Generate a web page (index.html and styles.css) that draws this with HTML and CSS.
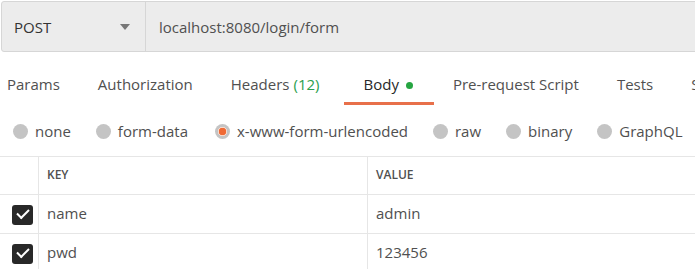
FILE: index.html
```html
<!DOCTYPE html>
<html lang="en">
<head>
    <meta charset="UTF-8">
    <title>Request</title>
    <link rel="stylesheet" href="styles.css">
</head>
<body>
    <div class="url-bar">
        <div class="method">
            <span>POST</span>
            <span class="caret"></span>
        </div>
        <div class="url">localhost:8080/login/form</div>
    </div>

    <div class="tabs">
        <span class="tab">Params</span>
        <span class="tab">Authorization</span>
        <span class="tab">Headers <em class="count">(12)</em></span>
        <span class="tab active">Body <i class="dot"></i></span>
        <span class="tab">Pre-request Script</span>
        <span class="tab">Tests</span>
        <span class="tab">Settings</span>
    </div>

    <div class="body-types">
        <label class="radio"><i></i>none</label>
        <label class="radio"><i></i>form-data</label>
        <label class="radio on"><i></i>x-www-form-urlencoded</label>
        <label class="radio"><i></i>raw</label>
        <label class="radio"><i></i>binary</label>
        <label class="radio"><i></i>GraphQL</label>
    </div>

    <div class="kv-table">
        <div class="row head">
            <div class="cell check"></div>
            <div class="cell key">KEY</div>
            <div class="cell value">VALUE</div>
        </div>
        <div class="row">
            <div class="cell check"><span class="box"></span></div>
            <div class="cell key">name</div>
            <div class="cell value">admin</div>
        </div>
        <div class="row">
            <div class="cell check"><span class="box"></span></div>
            <div class="cell key">pwd</div>
            <div class="cell value">123456</div>
        </div>
    </div>
</body>
</html>
```

FILE: styles.css
```css
* {
    margin: 0;
    padding: 0;
    box-sizing: border-box;
}
body {
    font-family: "Open Sans", "Liberation Sans", sans-serif;
    font-size: 15px;
    line-height: 20px;
    color: #505050;
    background: #fff;
    overflow: hidden;
    width: 695px;
    height: 269px;
}

/* url bar */
.url-bar {
    display: flex;
    height: 51px;
    margin: 1px -10px 0 1px;
    background: #ececec;
    border: 1px solid #d6d6d6;
    border-radius: 3px;
}
.method {
    width: 144px;
    display: flex;
    align-items: center;
    justify-content: space-between;
    padding: 0 15px 0 12px;
    border-right: 1px solid #d6d6d6;
    color: #333;
}
.caret {
    width: 0;
    height: 0;
    border-left: 5px solid transparent;
    border-right: 5px solid transparent;
    border-top: 6px solid #777;
    margin-top: 1px;
}
.url {
    display: flex;
    align-items: center;
    padding-left: 13px;
    color: #505050;
}

/* tabs */
.tabs {
    display: flex;
    white-space: nowrap;
    margin-left: -12px;
}
.tab {
    padding: 22px 19px 8px;
    border-bottom: 3px solid transparent;
    display: flex;
    align-items: center;
}
.tab.active {
    color: #282828;
    border-bottom-color: #e8704a;
    padding-right: 21px;
    margin-left: 6px;
}
.count {
    font-style: normal;
    color: #2a9e4e;
    margin-left: 4px;
}
.dot {
    width: 7px;
    height: 7px;
    border-radius: 50%;
    background: #26a541;
    margin-left: 7px;
    margin-top: 2px;
}

/* body types */
.body-types {
    display: flex;
    gap: 25px;
    padding: 16px 0 15px 13px;
    white-space: nowrap;
}
.radio {
    display: flex;
    align-items: center;
}
.radio i {
    width: 15px;
    height: 15px;
    border-radius: 50%;
    background: #c4c4c4;
    margin-right: 7px;
}
.radio.on {
    margin-left: 2px;
}
.radio.on i {
    background: radial-gradient(circle, #f06a35 0 3.5px, #f6d9cc 4px 4.5px, #c4c4c4 5px);
}

/* key value table */
.kv-table {
    border-top: 1px solid #e6e6e6;
}
.row {
    display: flex;
    height: 39px;
    border-bottom: 1px solid #e6e6e6;
}
.row.head {
    height: 38px;
    font-size: 12px;
    font-weight: 600;
}
.cell {
    display: flex;
    align-items: center;
    padding-left: 8px;
}
.check {
    width: 39px;
    padding-left: 12px;
    border-right: 1px solid #e6e6e6;
}
.key {
    width: 329px;
    border-right: 1px solid #e6e6e6;
}
.row .key, .row .value {
    padding-bottom: 2px;
}
.row.head .key, .row.head .value {
    padding-bottom: 1px;
}
.value {
    flex: 1;
}
.box {
    width: 21px;
    height: 20px;
    border-radius: 3px;
    background: #282828;
    position: relative;
    margin-top: 1px;
}
.box::after {
    content: "";
    position: absolute;
    left: 5px;
    top: 4px;
    width: 10px;
    height: 5px;
    border-left: 2.5px solid #fff;
    border-bottom: 2.5px solid #fff;
    transform: rotate(-45deg);
}
```
